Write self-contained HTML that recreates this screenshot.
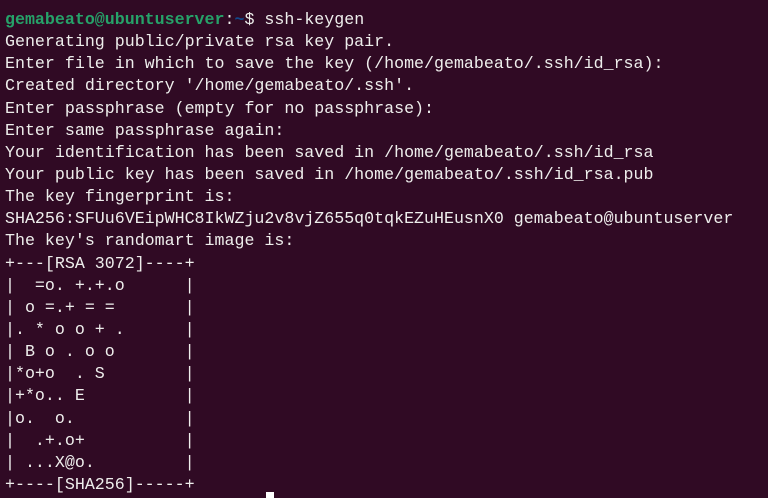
<!DOCTYPE html>
<html><head><style>
html,body{margin:0;padding:0;background:#300a24;width:768px;height:497px;overflow:hidden}
pre{margin:0;padding:9px 0 0 5px;font-family:"Liberation Mono",monospace;font-size:16.64px;line-height:22.14px;color:#eeeeec;letter-spacing:0}
.g{color:#26a269;font-weight:bold}.b{color:#12488b;font-weight:bold}
.cur{position:absolute;left:266px;top:492px;width:8px;height:6px;background:#fff}
</style></head><body><pre><span class="g">gemabeato@ubuntuserver</span>:<span class="b">~</span>$ ssh-keygen
Generating public/private rsa key pair.
Enter file in which to save the key (/home/gemabeato/.ssh/id_rsa):
Created directory '/home/gemabeato/.ssh'.
Enter passphrase (empty for no passphrase):
Enter same passphrase again:
Your identification has been saved in /home/gemabeato/.ssh/id_rsa
Your public key has been saved in /home/gemabeato/.ssh/id_rsa.pub
The key fingerprint is:
SHA256:SFUu6VEipWHC8IkWZju2v8vjZ655q0tqkEZuHEusnX0 gemabeato@ubuntuserver
The key's randomart image is:
+---[RSA 3072]----+
|  =o. +.+.o      |
| o =.+ = =       |
|. * o o + .      |
| B o . o o       |
|*o+o  . S        |
|+*o.. E          |
|o.  o.           |
|  .+.o+          |
| ...X@o.         |
+----[SHA256]-----+</pre><div class="cur"></div></body></html>
